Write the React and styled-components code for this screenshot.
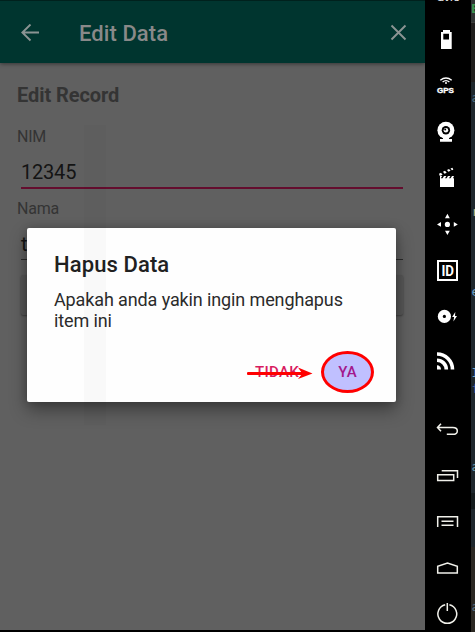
import React from "react";
import styled, { createGlobalStyle } from "styled-components";

const Global = createGlobalStyle`
  * { box-sizing: border-box; }
  html, body { margin: 0; background: #000; overflow: hidden; }
  body { font-family: Roboto, sans-serif; }
`;

const Window = styled.div`
  display: flex;
  width: 475px;
  height: 632px;
  overflow: hidden;
  background: #000;
`;

const Screen = styled.main`
  position: relative;
  display: flex;
  flex-direction: column;
  flex: none;
  width: 425px;
  height: 630px;
  overflow: hidden;
  background: #606060;
`;

const AppBar = styled.header`
  display: flex;
  align-items: center;
  flex: none;
  height: 63px;
  padding: 3px 17px 0 21px;
  background: #00352f;
  border-top: 1px solid #00211d;
  box-shadow: 0 1px 4px rgba(0, 0, 0, 0.45);
`;

const BarTitle = styled.h1`
  flex: 1;
  margin: 0 0 0 39px;
  font-size: 22px;
  font-weight: 500;
  line-height: 28px;
  letter-spacing: 0.08px;
  color: #898989;
`;

const BarIcon = styled.svg`
  display: block;
  flex: none;
  width: 19px;
  height: 19px;
  fill: none;
  stroke: #8b9493;
  stroke-width: 1.9;
`;

const Form = styled.section`
  display: flex;
  flex-direction: column;
  padding: 20px 22px 0 17px;
`;

const Heading = styled.h2`
  margin: 0;
  font-size: 20px;
  font-weight: 700;
  line-height: 24px;
  letter-spacing: -0.08px;
  color: #343434;
`;

const Label = styled.label`
  margin-top: ${(p) => p.$gap}px;
  font-size: 16px;
  line-height: 20px;
  letter-spacing: -0.2px;
  color: #343434;
`;

const Field = styled.div`
  height: ${(p) => (p.$active ? 42 : 41)}px;
  margin-left: 4px;
  padding-top: 13px;
  font-size: 20px;
  line-height: ${(p) => (p.$active ? 25 : 24)}px;
  letter-spacing: -0.2px;
  color: #141414;
  border-bottom: ${(p) => (p.$active ? "2px solid #640d2e" : "1px solid #2b2b2b")};
`;

const FormButton = styled.div`
  height: 40px;
  margin: 15px 0 0 4px;
  border-radius: 2px;
  background: #585858;
  box-shadow: 0 1px 2px rgba(0, 0, 0, 0.35);
`;

const Dialog = styled.section`
  position: absolute;
  left: 27px;
  top: 228px;
  display: flex;
  flex-direction: column;
  width: 369px;
  height: 174px;
  padding: 23px 27px 0;
  border-radius: 2px;
  background: #fefefe;
  box-shadow: 0 8px 17px rgba(0, 0, 0, 0.38), 0 0 9px rgba(0, 0, 0, 0.18);
`;

const GhostBand = styled.div`
  position: absolute;
  left: 84px;
  top: 125px;
  width: 22px;
  height: 300px;
  background: rgba(0, 0, 0, 0.018);
  pointer-events: none;
`;

const DialogTitle = styled.h3`
  margin: 0;
  font-size: 22px;
  font-weight: 500;
  line-height: 28px;
  letter-spacing: 0.1px;
  color: #212121;
`;

const DialogText = styled.p`
  margin: 10px 0 0;
  font-size: 18px;
  line-height: 21px;
  letter-spacing: -0.12px;
  color: #2b2b2b;
`;

const Actions = styled.div`
  display: flex;
  align-items: center;
  justify-content: flex-end;
  gap: 22px;
  margin: 20px -5px 0 0;
`;

const Action = styled.span`
  position: relative;
  font-size: 15px;
  font-weight: 500;
  line-height: 20px;
  letter-spacing: ${(p) => (p.$marked ? 0 : 0.3)}px;
  color: ${(p) => (p.$marked ? "#a3188c" : "#d81b60")};
  ${(p) =>
    p.$marked &&
    `
    display: grid;
    place-items: center;
    width: 53px;
    height: 42px;
    border: 3px solid #f00;
    border-radius: 50%;
    background: #c0c0ff;
  `}
`;

const Arrow = styled.svg`
  position: absolute;
  left: -8px;
  top: 4px;
  width: 66px;
  height: 14px;
  fill: #f00;
`;

const Rail = styled.nav`
  display: flex;
  flex-direction: column;
  flex: none;
  width: 46px;
  height: 632px;
  background: #000;
`;

const RailLabel = styled.div`
  flex: none;
  height: 22px;
  margin-top: -5px;
  font: 700 8px/8px "Liberation Sans", sans-serif;
  letter-spacing: -1.4px;
  text-indent: 12px;
  color: #e8e8e8;
`;

const RailIcon = styled.svg`
  display: block;
  flex: none;
  width: 46px;
  height: 46px;
  margin-top: ${(p) => p.$gap || 0}px;
  fill: ${(p) => (p.$line ? "none" : "#fff")};
  stroke: ${(p) => (p.$line ? "#f0f0ea" : "none")};
  stroke-width: 1.5;
`;

const Strip = styled.aside`
  display: flex;
  flex-direction: column;
  flex: none;
  width: 4px;
  height: 632px;
  overflow: hidden;
  background: linear-gradient(
    #303333 22px,
    #3e3e3c 22px 23px,
    #1f1d1c 23px 82px,
    #1e272d 82px 493px,
    #141b1d 493px 509px,
    #1e272d 509px 547px,
    #2b2823 547px
  );
`;

const CodeLine = styled.span`
  flex: none;
  height: 16px;
  margin-top: ${(p) => p.$gap}px;
  padding-left: ${(p) => p.$indent || 0.6}px;
  font: ${(p) => p.$weight || 400} 13px/16px "DejaVu Sans Mono", monospace;
  color: ${(p) => p.$color};
`;

const codeLines = [
  { text: "E", gap: 1, indent: 0.1, weight: 700, color: "#3d9350" },
  { text: "a", gap: 73, color: "#4a6f85" },
  { text: "r", gap: 98, color: "#b4b58b" },
  { text: "e", gap: 64, color: "#6a9fc4" },
  { text: "I", gap: 65, color: "#6ba4cb" },
  { text: "f", gap: 0, color: "#4166a8" },
  { text: "a", gap: 62, color: "#6a9fb4" },
  { text: "a", gap: 124, color: "#587286" },
];

export default function App() {
  return (
    <Window>
      <Global />
      <Screen>
        <AppBar>
          <BarIcon viewBox="0 0 19 19"><path d="M18 8.5H1.5M9.5 .5 1.3 8.5l8.2 8" /></BarIcon>
          <BarTitle>Edit Data</BarTitle>
          <BarIcon viewBox="0 0 19 19"><path d="M2.5 1.5l14 14M16.5 1.5l-14 14" /></BarIcon>
        </AppBar>
        <Form>
          <Heading>Edit Record</Heading>
          <Label $gap={20}>NIM</Label>
          <Field $active>12345</Field>
          <Label $gap={10}>Nama</Label>
          <Field>tes</Field>
          <FormButton />
        </Form>
        <Dialog>
          <DialogTitle>Hapus Data</DialogTitle>
          <DialogText>Apakah anda yakin ingin menghapus item ini</DialogText>
          <Actions>
            <Action>
              TIDAK
              <Arrow viewBox="0 0 66 14"><path d="M1.2 6h53L51 1.5 65.5 7.5 51 13l3.2-4H1.2a1.5 1.5 0 0 1 0-3z" /></Arrow>
            </Action>
            <Action $marked>YA</Action>
          </Actions>
        </Dialog>
        <GhostBand />
      </Screen>
      <Rail>
        <RailLabel>GAPPS</RailLabel>
        <RailIcon viewBox="0 0 46 46">
          <path fillRule="evenodd" d="M18 13h7v2h1.7v17H16V15h2zM18.3 16.7v5.8H24v-5.8z" />
        </RailIcon>
        <RailIcon viewBox="0 0 46 46">
          <path d="M15.3 17.3q5.7-4.6 11.4 0M17.6 19q3.4-2.7 6.8 0" fill="none" stroke="#fff" strokeWidth="1.4" />
          <circle cx="21" cy="20" r="1" />
          <text x="12" y="29.6" fontFamily="Liberation Sans" fontWeight="700" fontSize="7.6" stroke="#fff" strokeWidth=".35" textLength="17" lengthAdjust="spacingAndGlyphs">GPS</text>
        </RailIcon>
        <RailIcon viewBox="0 0 46 46">
          <circle cx="20.9" cy="21.3" r="8.5" />
          <path d="M18 28h6v2h3v2.7H15V30h3z" />
          <circle cx="20.9" cy="21.3" r="4.2" fill="#000" />
          <circle cx="20.9" cy="21.3" r="2.3" />
          <circle cx="20.2" cy="20.4" r="1" fill="#000" />
        </RailIcon>
        <RailIcon viewBox="0 0 46 46">
          <path d="M15 23.2h14V32H15zM15 21h2.2l-1.4 2.2H15zM19 21h2.4L20 23.2h-2.4zM23 21h2.4L24 23.2h-2.4zM27 21h2l-1 2.2h-2.4z" />
          <path d="M14 18.8l2-1 1.6 2-2.8 1.2zM18 16.8l2-1 1.7 1.9-2.2 1zM22 14.9l2-1 1.6 1.9-2.2 1zM25.5 13.5l2-.7.8 2-1.4.5z" />
        </RailIcon>
        <RailIcon viewBox="0 0 46 46">
          <circle cx="22.4" cy="23.4" r="2.6" />
          <path d="M22.4 12.8l2.4 4.4H20zM22.4 34l2.4-4.2H20zM12 23.4l4-2.3v4.6zM32.8 23.4l-4-2.3v4.6z" />
        </RailIcon>
        <RailIcon viewBox="0 0 46 46">
          <path fillRule="evenodd" d="M12 13h21v21H12zM14 15v17h17V15z" />
          <text x="16.4" y="28.6" fontFamily="Roboto" fontWeight="700" fontSize="14" textLength="12.6" lengthAdjust="spacingAndGlyphs">ID</text>
        </RailIcon>
        <RailIcon viewBox="0 0 46 46">
          <circle cx="19.4" cy="23.4" r="6.6" />
          <circle cx="19.4" cy="23.4" r="1.6" fill="#000" />
          <path d="M30.3 19l-3.2 5h2l-.7 4.4L32 23h-2z" />
        </RailIcon>
        <RailIcon viewBox="0 0 46 46">
          <path d="M12 15A15.5 15.5 0 0 1 27.5 30.4M12 21.2A9.3 9.3 0 0 1 21.3 30.4" fill="none" stroke="#fff" strokeWidth="3.6" />
          <path d="M12 26.3a4 4 0 0 1 4 4.1h-4z" />
        </RailIcon>
        <RailIcon $line $gap={21} viewBox="0 0 46 46">
          <path d="M12.8 21.5h15c6 0 6 6.8 0 6.8h-6M16 17.8l-3.5 3.7 3.5 3.7" />
        </RailIcon>
        <RailIcon $line viewBox="0 0 46 46">
          <path d="M12.7 22.8h16v5.7h-16zM16.7 18.8h15.8V26" />
        </RailIcon>
        <RailIcon $line viewBox="0 0 46 46">
          <path d="M12.7 29V18.7h19.8V29M16.5 23.2h12M16.5 27.3h12" />
        </RailIcon>
        <RailIcon $line viewBox="0 0 46 46">
          <path d="M12.7 29v-6.7l9.8-3.3 9.8 3.3V29z" />
        </RailIcon>
        <RailIcon $line viewBox="0 0 46 46">
          <path d="M20.2 14.8a9.4 9.4 0 1 0 4.2 0M22.3 13v8" />
        </RailIcon>
      </Rail>
      <Strip>
        {codeLines.map((l, i) => (
          <CodeLine key={i} $gap={l.gap} $indent={l.indent} $weight={l.weight} $color={l.color}>
            {l.text}
          </CodeLine>
        ))}
      </Strip>
    </Window>
  );
}
